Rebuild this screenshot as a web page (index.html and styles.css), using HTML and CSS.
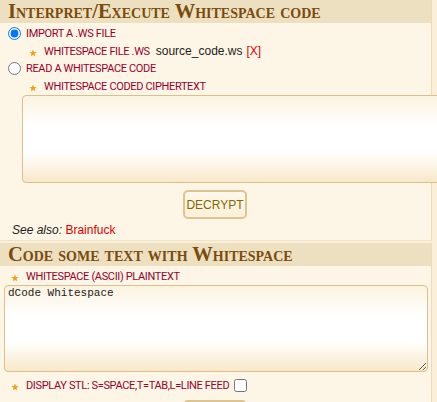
FILE: index.html
```html
<!DOCTYPE html>
<html>
<head>
<meta charset="utf-8">
<link rel="stylesheet" href="styles.css">
</head>
<body>
<div class="page">
  <section class="card">
    <h2 class="card-title">Interpret/Execute Whitespace code</h2>
    <div class="card-body">
      <label class="opt"><input type="radio" name="m" checked class="radio"><span class="lbl">IMPORT A .WS FILE</span></label>
      <div class="sub"><svg class="star" viewBox="0 0 10 10"><path d="M5 0.6 6.3 3.6 9.5 3.8 7 5.9 7.8 9.2 5 7.4 2.2 9.2 3 5.9 0.5 3.8 3.7 3.6Z" fill="#f0a21e"/></svg><span class="lbl">WHITESPACE FILE .WS</span><span class="fname">source_code.ws</span><span class="rm">[X]</span></div>
      <label class="opt opt2"><input type="radio" name="m" class="radio"><span class="lbl">READ A WHITESPACE CODE</span></label>
      <div class="sub sub2"><svg class="star" viewBox="0 0 10 10"><path d="M5 0.6 6.3 3.6 9.5 3.8 7 5.9 7.8 9.2 5 7.4 2.2 9.2 3 5.9 0.5 3.8 3.7 3.6Z" fill="#f0a21e"/></svg><span class="lbl">WHITESPACE CODED CIPHERTEXT</span></div>
      <textarea class="area area-indent"></textarea>
      <div class="btn-row"><button class="btn">DECRYPT</button></div>
      <div class="see"><em>See also:</em> <a class="link">Brainfuck</a></div>
    </div>
  </section>
  <section class="card">
    <h2 class="card-title">Code some text with Whitespace</h2>
    <div class="card-body">
      <div class="sub sub3"><svg class="star" viewBox="0 0 10 10"><path d="M5 0.6 6.3 3.6 9.5 3.8 7 5.9 7.8 9.2 5 7.4 2.2 9.2 3 5.9 0.5 3.8 3.7 3.6Z" fill="#f0a21e"/></svg><span class="lbl">WHITESPACE (ASCII) PLAINTEXT</span></div>
      <textarea class="area area-full">dCode Whitespace</textarea>
      <div class="sub sub4"><svg class="star" viewBox="0 0 10 10"><path d="M5 0.6 6.3 3.6 9.5 3.8 7 5.9 7.8 9.2 5 7.4 2.2 9.2 3 5.9 0.5 3.8 3.7 3.6Z" fill="#f0a21e"/></svg><span class="lbl">DISPLAY STL: S=SPACE,T=TAB,L=LINE FEED</span><input type="checkbox" class="check"></div>
      <div class="btn-row btn-row2"><button class="btn">ENCRYPT</button></div>
    </div>
  </section>
</div>
</body>
</html>
```
FILE: styles.css
```css
html, body {
  margin: 0;
  padding: 0;
  overflow: hidden;
  background: #fcefd9;
}
.page {
  width: 432px;
  font-family: "Liberation Sans", Arial, sans-serif;
}
.card {
  background: #fdf6e7;
  border-right: 1px solid #eddcb9;
  border-bottom: 1px solid #efe2c6;
  margin-bottom: 2px;
}
.card-title {
  margin: 0;
  height: 23px;
  line-height: 22px;
  padding-left: 8px;
  background: #ede0c0;
  color: #7a4b0e;
  font-family: "Liberation Serif", "Times New Roman", serif;
  font-weight: bold;
  font-variant: small-caps;
  font-size: 20.5px;
}
.card-body {
  padding: 1px 0 0 0;
}
.opt {
  display: flex;
  align-items: center;
  height: 18px;
  padding-left: 8px;
}
.opt2 { height: 17px; }
.radio {
  margin: 0 5px 0 0;
  width: 13px;
  height: 13px;
}
.lbl {
  color: #99002b;
  font-family: Roboto, "Liberation Sans", Arial, sans-serif;
  font-size: 11px;
  letter-spacing: -0.35px;
}
.sub {
  display: flex;
  align-items: center;
  height: 18px;
  padding-left: 29px;
}
.star {
  width: 8px;
  height: 8px;
  margin: 3px 7px 0 0;
  flex: none;
}
.fname {
  margin-left: 6px;
  color: #222;
  font-size: 12px;
}
.rm {
  margin-left: 4px;
  color: #e00000;
  font-size: 12px;
}
.area {
  display: block;
  box-sizing: border-box;
  width: 424px;
  border: 1px solid #d9c08c;
  border-radius: 4px;
  background: linear-gradient(to bottom, #fcf3e0 0%, #ffffff 35%, #ffffff 65%, #f8e8c9 100%);
  font-family: "Liberation Mono", "DejaVu Sans Mono", monospace;
  font-size: 11px;
  color: #222;
  padding: 1px 3px;
  margin: 0;
  resize: both;
}
.area-indent {
  margin-left: 22px;
  height: 88px;
}
.area-full {
  margin-left: 4px;
  height: 87px;
}
.btn-row {
  display: flex;
  justify-content: center;
  margin-top: 7px;
  width: 430px;
}
.btn {
  box-sizing: border-box;
  width: 64px;
  height: 29px;
  border: 2px solid #dcc590;
  border-radius: 5px;
  background: linear-gradient(to bottom, #fdf8ea, #fbf0d9);
  color: #856800;
  font-family: "Liberation Sans", Arial, sans-serif;
  font-size: 12px;
  padding: 0;
}
.see {
  height: 21px;
  line-height: 22px;
  padding-left: 12px;
  font-size: 12px;
  color: #222;
}
.link {
  color: #dd0000;
}
.sub3 {
  padding-left: 11px;
}
.sub4 {
  padding-left: 11px;
  margin-top: 4px;
}
.check {
  margin: 0 0 0 5px;
  width: 13px;
  height: 13px;
}
.btn-row2 {
  margin-top: 6px;
}
```
